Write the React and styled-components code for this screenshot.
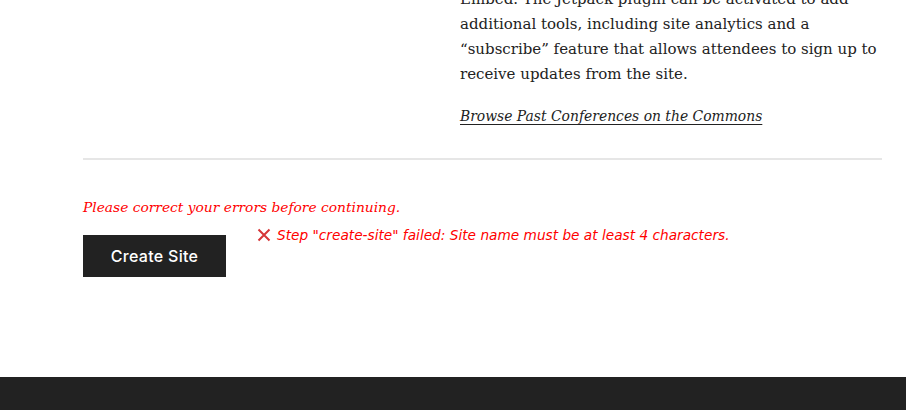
import styled, { createGlobalStyle } from 'styled-components';

const GlobalStyle = createGlobalStyle`
  html, body {
    margin: 0;
    padding: 0;
    background: #fff;
    overflow: hidden;
  }
  body {
    font-family: "DejaVu Serif", "Liberation Serif", serif;
    color: #222;
  }
`;

const Page = styled.div`
  display: flex;
  flex-direction: column;
  min-height: 410px;
`;

const Main = styled.main`
  width: 799px;
  margin: -13px 0 0 83px;
`;

const Columns = styled.div`
  display: grid;
  grid-template-columns: 377px 1fr;
`;

const Copy = styled.div`
  font-size: 15px;
  line-height: 25px;
`;

const Paragraph = styled.p`
  margin: 0 0 17px;
`;

const PastLink = styled.a`
  font-size: 13.9px;
  font-style: italic;
  color: #222;
  text-decoration: underline;
  text-underline-offset: 3px;
  text-decoration-thickness: 1px;
`;

const Divider = styled.hr`
  border: none;
  height: 2px;
  background: #e6e6e6;
  margin: 29px 0 0;
`;

const ErrorSummary = styled.p`
  margin: 35px 0 15px;
  font-size: 13.8px;
  line-height: 25px;
  font-style: italic;
  color: #f00;
`;

const SubmitRow = styled.div`
  display: flex;
  align-items: flex-start;
  gap: 31px;
`;

const Button = styled.button`
  width: 143px;
  height: 42px;
  border: none;
  border-radius: 0;
  background: #222;
  color: #fff;
  font-family: Inter, "Open Sans", sans-serif;
  font-size: 16px;
  font-weight: 500;
  letter-spacing: 0.3px;
  cursor: pointer;
`;

const StepError = styled.div`
  display: flex;
  align-items: center;
  gap: 6px;
  margin-top: -8px;
  font-family: "DejaVu Sans", "Open Sans", sans-serif;
  font-size: 13.7px;
  font-style: italic;
  color: #f00;
`;

const Footer = styled.footer`
  margin-top: auto;
  height: 33px;
  background: #222;
`;

const CrossIcon = () => (
  <svg width="14" height="14" viewBox="0 0 14 14" aria-hidden="true">
    <path d="M1.5 1.5 L12.5 12.5 M12.5 1.5 L1.5 12.5" stroke="#d63638" strokeWidth="2" fill="none" />
  </svg>
);

export default function App() {
  return (
    <Page>
      <GlobalStyle />
      <Main>
        <Columns>
          <div />
          <Copy>
            <Paragraph>
              Embed. The Jetpack plugin can be activated to add additional tools, including site
              analytics and a “subscribe” feature that allows attendees to sign up to receive
              updates from the site.
            </Paragraph>
            <PastLink href="#">Browse Past Conferences on the Commons</PastLink>
          </Copy>
        </Columns>
        <Divider />
        <ErrorSummary>Please correct your errors before continuing.</ErrorSummary>
        <SubmitRow>
          <Button type="button">Create Site</Button>
          <StepError>
            <CrossIcon />
            <span>Step "create-site" failed: Site name must be at least 4 characters.</span>
          </StepError>
        </SubmitRow>
      </Main>
      <Footer />
    </Page>
  );
}
